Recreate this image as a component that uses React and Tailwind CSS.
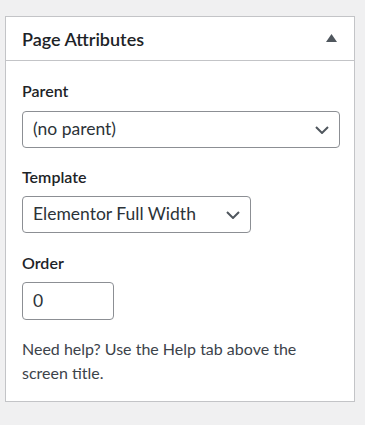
import React from "react";

function Chevron() {
  return (
    <svg width="14" height="8" viewBox="0 0 14 8" className="shrink-0">
      <path d="M1 1l6 6 6-6" fill="none" stroke="#50575e" strokeWidth="2" />
    </svg>
  );
}

function Select({ value, width }) {
  return (
    <div
      className={`flex items-center justify-between h-[37px] border border-[#8c8f94] rounded-[4px] bg-white pl-[10px] pr-[10px] text-[17.5px] text-[#2c3338] ${width}`}
    >
      <span>{value}</span>
      <Chevron />
    </div>
  );
}

export default function App() {
  return (
    <div
      className="min-h-[425px] bg-[#f0f0f1] pt-[16px] pl-[5px] text-[#1d2327]"
      style={{ fontFamily: 'Lato, "Noto Sans", sans-serif' }}
    >
      <div className="w-[350px] h-[386px] bg-white border border-[#c3c4c7]">
        <div className="h-[44px] flex items-center justify-between pl-[16px] pr-[17px] border-b border-[#c3c4c7]">
          <h2 className="text-[18px] font-semibold leading-[24px]">Page Attributes</h2>
          <svg width="11" height="8" viewBox="0 0 11 8" className="-mt-[2px]">
            <path d="M5.5 0L11 8H0z" fill="#50575e" />
          </svg>
        </div>
        <div className="pl-[16px] pr-[16px] pt-[18px]">
          <p className="text-[16px] font-semibold leading-[24px]">Parent</p>
          <div className="mt-[8px]">
            <Select value="(no parent)" width="w-[318px]" />
          </div>
          <p className="mt-[17px] text-[16px] font-semibold leading-[24px]">Template</p>
          <div className="mt-[7px]">
            <Select value="Elementor Full Width" width="w-[229px]" />
          </div>
          <p className="mt-[18px] text-[16px] font-semibold leading-[24px]">Order</p>
          <div className="mt-[7px] w-[92px] h-[38px] border border-[#8c8f94] rounded-[4px] flex items-center pl-[10px] text-[17.5px] text-[#2c3338]">
            0
          </div>
          <p className="mt-[17px] text-[16px] leading-[24px] text-[#3c434a]">
            Need help? Use the Help tab above the screen title.
          </p>
        </div>
      </div>
    </div>
  );
}
